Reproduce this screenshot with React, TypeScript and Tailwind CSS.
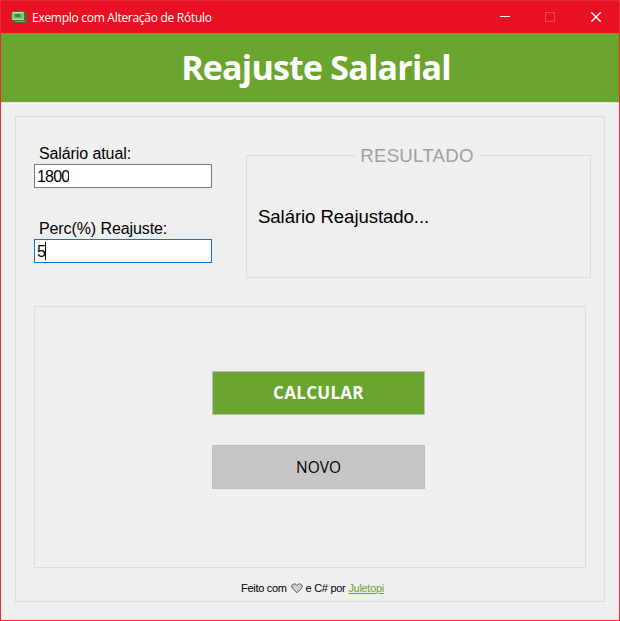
import { useState } from "react";

const SANS = "font-['Liberation_Sans',Arial,sans-serif]";
const UI = "font-['Open_Sans','Noto_Sans',sans-serif]";

function AppIcon() {
  return (
    <svg width="16" height="13" viewBox="0 0 16 13" shapeRendering="crispEdges">
      <path d="M2 0h11l1 2 2 1v8l-1 1H4l-3-2-1-2V2z" fill="#41703a" />
      <path d="M1 1h12v8H1z" fill="#8fc47f" />
      <path d="M2 1h10v1H2z" fill="#b9e5a4" />
      <path d="M3 3h8v4H3z" fill="#79ad6c" />
      <path d="M4 3h5v3H4z" fill="#4f7a49" />
      <path d="M2 8h11v1H2z" fill="#b2e09c" />
      <path d="M4 10h10v1H4z" fill="#70a563" />
    </svg>
  );
}

function TitleBar() {
  return (
    <header className="flex h-8 items-center bg-[#e81123] pl-[10px] text-white">
      <AppIcon />
      <span className={`${UI} ml-[5px] whitespace-nowrap pt-px text-[12px] leading-4 tracking-[-0.28px]`}>
        Exemplo com Alteração de Rótulo
      </span>
      <div className="ml-auto flex items-center">
        <svg width="10" height="10" className="mr-[35px]" shapeRendering="crispEdges">
          <path d="M0 4h10v1H0z" fill="#fff" />
        </svg>
        <svg width="10" height="10" className="mr-[36px]" shapeRendering="crispEdges">
          <path d="M.5.5h9v9h-9z" fill="none" stroke="#f04450" />
        </svg>
        <svg width="10" height="10" className="mr-[18px]">
          <path d="M.3.3l9.4 9.4M9.7.3L.3 9.7" stroke="#fff" strokeWidth="1.3" />
        </svg>
      </div>
    </header>
  );
}

type FieldProps = {
  label: string;
  value: string;
  onChange: (value: string) => void;
  focused?: boolean;
};

function Field({ label, value, onChange, focused }: FieldProps) {
  return (
    <label className="flex flex-col">
      <span className="ml-[5px] h-5 whitespace-nowrap text-[16px] leading-5 tracking-[-0.1px]">{label}</span>
      <span
        className={`flex h-6 w-[178px] items-center border bg-white pl-[2px] ${
          focused ? "border-[#0078d7]" : "border-[#7a7a7a]"
        }`}
      >
        <input
          className="field-sizing-content h-[22px] min-w-0 pt-[2px] text-[16px] leading-5 tracking-[-0.8px] outline-none"
          value={value}
          onChange={(e) => onChange(e.target.value)}
        />
        {focused && <span className="h-[18px] w-px bg-black" />}
      </span>
    </label>
  );
}

function Heart() {
  return (
    <svg width="12" height="11" viewBox="0 0 12 11" className="ml-[4px] mr-[3px]">
      <path
        d="M6 9.8L1.5 5.3C.2 3.9.7 1.6 2.3 1.1 3.8.6 5.2 1.2 6 2.5 6.8 1.2 8.2.6 9.7 1.1c1.6.5 2.1 2.8.8 4.2z"
        fill="#cfcdd3"
        stroke="#55505a"
        strokeWidth="1"
      />
    </svg>
  );
}

export default function App() {
  const [salary, setSalary] = useState("1800");
  const [percent, setPercent] = useState("5");

  return (
    <div className={`${SANS} flex h-[621px] w-[620px] flex-col border border-[#e8293a] bg-[#efefef] text-black`}>
      <TitleBar />
      <div className="flex h-[69px] items-center justify-center bg-[#6aa62f] pb-[2px] pl-[12px]">
        <h1 className={`${UI} whitespace-nowrap text-[34px] font-bold leading-[48px] tracking-[-0.8px] text-white`}>
          Reajuste Salarial
        </h1>
      </div>
      <div className="h-[2px] border-b border-white bg-[#e3e3e3]" />

      <main className="ml-[14px] mt-[12px] flex h-[486px] w-[590px] flex-col border border-[#dcdcdc]">
        <div className="flex h-[189px] pl-[18px]">
          <div className="flex flex-col gap-[31px] pt-[27px]">
            <Field label="Salário atual:" value={salary} onChange={setSalary} />
            <Field label="Perc(%) Reajuste:" value={percent} onChange={setPercent} focused />
          </div>
          <section className="ml-[34px] mt-[38px] h-[123px] w-[345px] border border-[#dcdcdc]">
            <div className="-mt-[11px] ml-[108px] flex h-[22px] w-[124px] justify-center bg-[#efefef] text-[18.67px] leading-[22px] tracking-[0.25px] text-[#a0a0a0]">
              RESULTADO
            </div>
            <p className="ml-[11px] mt-[39px] whitespace-nowrap text-[18.67px] leading-[22px] tracking-[-0.1px]">
              Salário Reajustado...
            </p>
          </section>
        </div>

        <section className="ml-[18px] flex h-[262px] w-[552px] flex-col items-center gap-[30px] border border-[#dcdcdc] pl-[17px] pt-[64px]">
          <button
            className={`${UI} h-11 w-[213px] border border-[#b9bdb5] bg-[#6aa62f] text-[17px] font-bold leading-6 tracking-[0.3px] text-white`}
          >
            CALCULAR
          </button>
          <button className={`${UI} h-11 w-[213px] border border-[#bfbfbf] bg-[#c6c6c6] text-[15.5px] font-normal leading-5`}>
            NOVO
          </button>
        </section>

        <footer className="mt-[12px] flex h-4 items-center whitespace-nowrap pl-[225px] text-[11px] leading-4 tracking-[-0.3px]">
          <span>Feito com</span>
          <Heart />
          <span>e C# por</span>
          <a href="#" className="ml-[3px] text-[#6aa62f] underline">Juletopi</a>
        </footer>
      </main>
    </div>
  );
}
